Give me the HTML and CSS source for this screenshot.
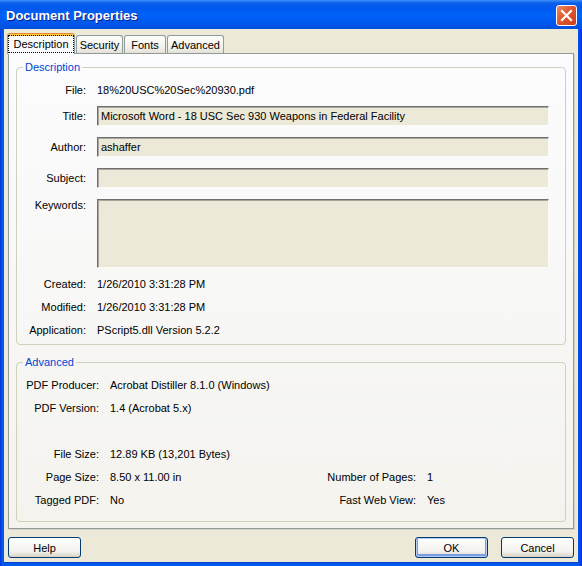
FILE: index.html
```html
<!DOCTYPE html>
<html lang="en">
<head>
  <meta charset="UTF-8" />
  <title>Document Properties</title>
  <link rel="stylesheet" href="styles.css">
</head>
<body>
  <div class="window">
    <div class="titlebar">
      <span class="title">Document Properties</span>
      <div class="close-btn">
        <svg width="19" height="19" viewBox="0 0 19 19">
          <path d="M5 5 L14 14 M14 5 L5 14" stroke="#fff" stroke-width="2.2" stroke-linecap="square" fill="none"/>
        </svg>
      </div>
    </div>

    <div class="client">
      <div class="tabs">
        <div class="tab active"><span class="focus">Description</span></div>
        <div class="tab tab-security">Security</div>
        <div class="tab tab-fonts">Fonts</div>
        <div class="tab tab-advanced">Advanced</div>
      </div>

      <div class="panel">
        <fieldset class="group group-desc">
          <legend>Description</legend>
          <div class="row file-row">
            <span class="label">File:</span>
            <span class="value">18%20USC%20Sec%20930.pdf</span>
          </div>
          <div class="row field-row">
            <span class="label">Title:</span>
            <div class="field">Microsoft Word - 18 USC Sec 930 Weapons in Federal Facility</div>
          </div>
          <div class="row field-row">
            <span class="label">Author:</span>
            <div class="field">ashaffer</div>
          </div>
          <div class="row field-row">
            <span class="label">Subject:</span>
            <div class="field"></div>
          </div>
          <div class="row field-row keywords-row">
            <span class="label">Keywords:</span>
            <div class="field big"></div>
          </div>
          <div class="row info-row">
            <span class="label">Created:</span>
            <span class="value">1/26/2010 3:31:28 PM</span>
          </div>
          <div class="row info-row">
            <span class="label">Modified:</span>
            <span class="value">1/26/2010 3:31:28 PM</span>
          </div>
          <div class="row info-row">
            <span class="label">Application:</span>
            <span class="value">PScript5.dll Version 5.2.2</span>
          </div>
        </fieldset>

        <fieldset class="group group-adv">
          <legend>Advanced</legend>
          <div class="adv-grid">
            <span class="label">PDF Producer:</span>
            <span class="value">Acrobat Distiller 8.1.0 (Windows)</span>
            <span></span><span></span>

            <span class="label">PDF Version:</span>
            <span class="value">1.4 (Acrobat 5.x)</span>
            <span></span><span></span>

            <span></span><span></span><span></span><span></span>

            <span class="label">File Size:</span>
            <span class="value">12.89 KB (13,201 Bytes)</span>
            <span></span><span></span>

            <span class="label">Page Size:</span>
            <span class="value">8.50 x 11.00 in</span>
            <span class="label">Number of Pages:</span>
            <span class="value">1</span>

            <span class="label">Tagged PDF:</span>
            <span class="value">No</span>
            <span class="label">Fast Web View:</span>
            <span class="value">Yes</span>
          </div>
        </fieldset>
      </div>

      <div class="buttons">
        <button class="btn">Help</button>
        <div class="right-buttons">
          <button class="btn default">OK</button>
          <button class="btn">Cancel</button>
        </div>
      </div>
    </div>
  </div>
</body>
</html>
```

FILE: styles.css
```css
:root {
  --xp-blue: #0054e3;
  --dialog-bg: #ece9d8;
  --tab-border: #919b9c;
  --group-border: #d0d0bf;
  --group-text: #0046d5;
  --font: "Liberation Sans", Arial, sans-serif;
}

body {
  margin: 0;
  font-family: var(--font);
  font-size: 11px;
  color: #000;
  background: #fff;
}

.window {
  width: 582px;
  height: 566px;
  display: flex;
  flex-direction: column;
  background: linear-gradient(to right, #0831d9 0, #0058ee 2px, #0058ee 578px, #0831d9 582px);
}

/* title bar */
.titlebar {
  height: 29px;
  flex: none;
  display: flex;
  align-items: center;
  justify-content: space-between;
  padding-left: 6px;
  background: linear-gradient(to bottom, #3d8ff7 0, #0a5fe8 3px, #0058ee 8px, #0062f9 15px, #0058ee 22px, #004fdc 29px);
}

.title {
  color: #fff;
  font-size: 13px;
  font-weight: bold;
  padding-top: 2px;
  text-shadow: 1px 1px 0 #0a1e8c;
}

.close-btn {
  width: 19px;
  height: 19px;
  margin-right: 5px;
  margin-top: 1px;
  border: 1px solid #fff;
  border-radius: 3px;
  background: linear-gradient(to bottom right, #ec8a6c 0%, #e0582f 45%, #c93f1a 100%);
}

.close-btn svg {
  display: block;
}

/* client area */
.client {
  flex: 1;
  min-height: 0;
  margin: 0 4px 3px;
  padding: 4px;
  background: var(--dialog-bg);
  display: flex;
  flex-direction: column;
  border-bottom: 1px solid #0a3fc4;
}

.tabs {
  height: 20px;
  flex: none;
  display: flex;
  align-items: flex-end;
  gap: 1px;
}

.tab {
  height: 18px;
  box-sizing: border-box;
  display: flex;
  align-items: center;
  justify-content: center;
  border: 1px solid var(--tab-border);
  border-bottom: none;
  border-radius: 3px 3px 0 0;
  background: linear-gradient(to bottom, #fefefe, #f4f3ee 60%, #e3e1d6);
}

.tab.active {
  width: 68px;
  height: 21px;
  margin-left: -1px;
  margin-bottom: -1px;
  position: relative;
  z-index: 1;
  border-top: 1px solid #e68b2c;
  box-shadow: inset 0 2px 0 #ffc83c;
  background: #fcfcfe;
}

.tab-security { width: 47px; }
.tab-fonts { width: 42px; }
.tab-advanced { width: 57px; }

.focus {
  outline: 1px dotted #000;
  padding: 1px 4px;
  line-height: 14px;
}

.panel {
  flex: 1;
  min-height: 0;
  border: 1px solid var(--tab-border);
  padding: 6px 7px 3px;
  background: linear-gradient(to bottom, #fcfcfe, #f4f3ee);
  box-shadow: 1px 1px 0 #d6d3c6;
}

/* group boxes */
.group {
  margin: 0;
  padding: 6px 16px 3px 0;
  border: 1px solid var(--group-border);
  border-radius: 4px;
  min-width: 0;
}

.group legend {
  margin-left: 6px;
  padding: 0 2px;
  line-height: 14px;
  color: var(--group-text);
}

.group-adv {
  margin-top: 10px;
  padding: 4px 0 10px;
}

.row {
  display: flex;
  align-items: center;
  height: 20px;
}

.row .label {
  flex: none;
  width: 69px;
  margin-right: 11px;
  text-align: right;
}

.field-row {
  margin-top: 11px;
}

.file-row + .field-row {
  margin-top: 6px;
}

.field {
  flex: 1;
  height: 20px;
  box-sizing: border-box;
  padding: 0 3px;
  line-height: 18px;
  background: #ece9d8;
  border: 1px solid;
  border-color: #6f6f6f #fbfbf8 #fbfbf8 #6f6f6f;
  box-shadow: inset 1px 1px 0 #a8a69c;
}

.keywords-row {
  height: 69px;
  align-items: flex-start;
}

.keywords-row .label {
  line-height: 13px;
}

.field.big {
  height: 69px;
}

.info-row {
  height: 23px;
}

.keywords-row + .info-row {
  margin-top: 4px;
}

.adv-grid {
  display: grid;
  grid-template-columns: 82px 190px 105px 1fr;
  grid-auto-rows: 23px;
  column-gap: 11px;
  align-items: center;
}

.adv-grid .label {
  text-align: right;
}

/* buttons */
.buttons {
  flex: none;
  margin-top: 8px;
  display: flex;
  justify-content: space-between;
}

.right-buttons {
  display: flex;
  gap: 13px;
}

.btn {
  width: 73px;
  height: 21px;
  padding: 0;
  font-family: var(--font);
  font-size: 11px;
  color: #000;
  border: 1px solid #003c74;
  border-radius: 3px;
  background: linear-gradient(to bottom, #ffffff, #f3f2ee 70%, #e2ded2 90%, #d6d0c5);
}

.btn.default {
  box-shadow: inset 0 0 0 1px #b4ccf4, inset 0 -1px 0 2px #7b9de6;
}
```
